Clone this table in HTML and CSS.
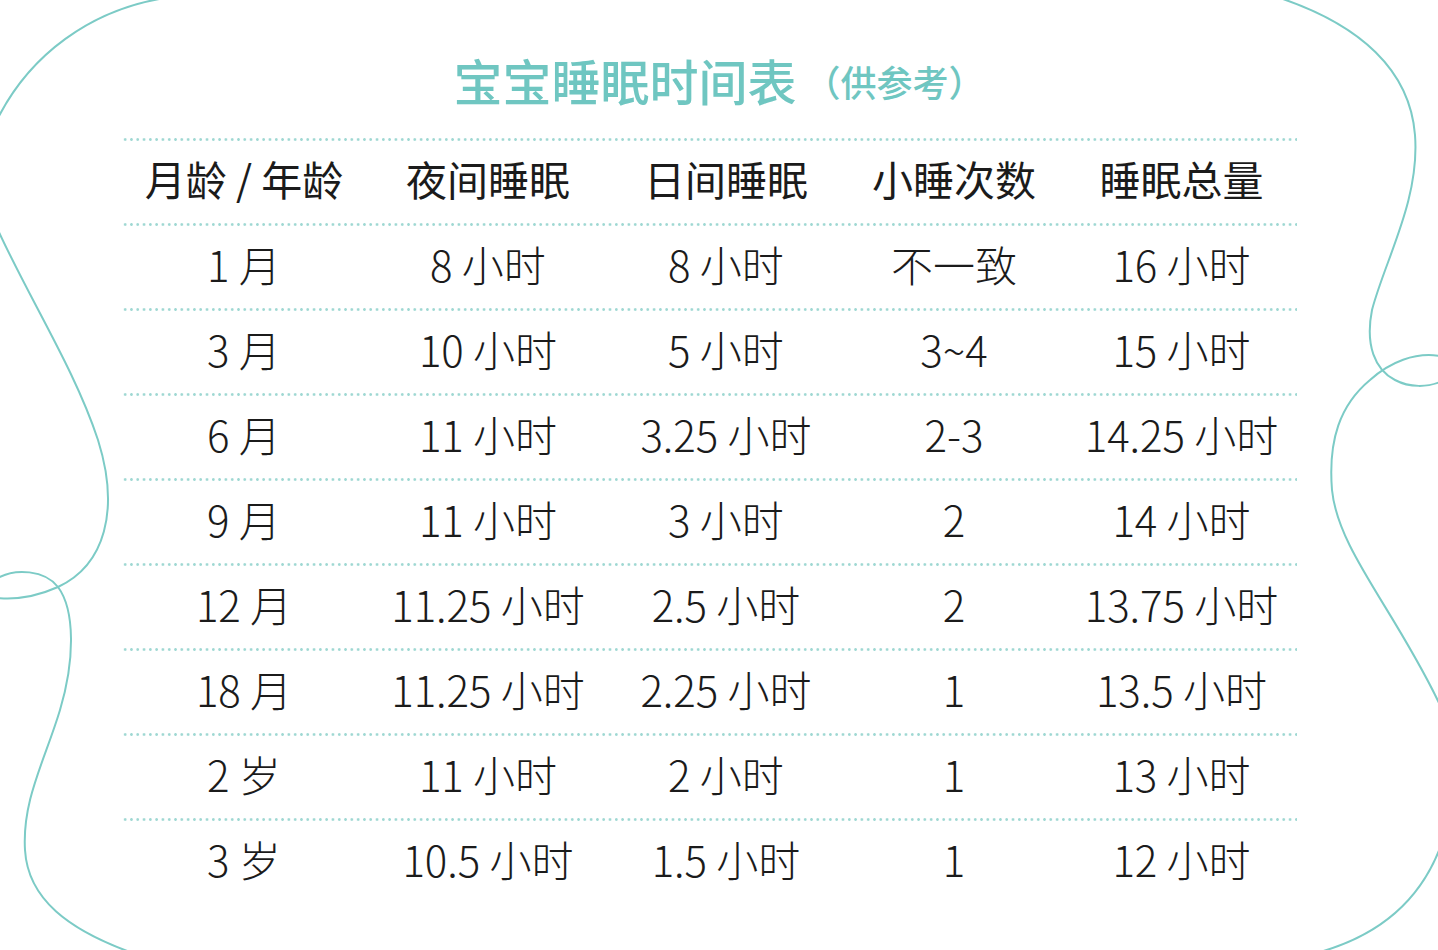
FILE: index.html
```html
<!DOCTYPE html>
<html lang="zh-CN">
<head>
<meta charset="utf-8">
<title>宝宝睡眠时间表</title>
<link rel="stylesheet" href="styles.css">
</head>
<body>
<div class="page">
  <svg class="blob" width="1438" height="950" viewBox="0 0 1438 950" aria-hidden="true">
    <g fill="none" stroke="#7ccbc6" stroke-width="2">
      <path d="M 165 -2 C 90 10, 30 55, -2 118"/>
      <path d="M -2 230 C 30 300, 75 370, 98 440 C 120 510, 105 565, 58 587 C 40 595, 20 600, -2 598"/>
      <path d="M -2 578 C 15 568, 45 570, 58 587 C 75 610, 75 660, 60 710 C 45 760, 22 800, 25 850 C 28 900, 70 930, 130 952"/>
      <path d="M 1280 -2 C 1360 25, 1410 70, 1415 135 C 1420 200, 1385 260, 1372 310 C 1365 345, 1375 370, 1395 380 C 1410 388, 1428 387, 1440 382"/>
      <path d="M 1440 356 C 1415 352, 1390 362, 1370 380 C 1340 405, 1328 440, 1332 490 C 1338 550, 1395 610, 1440 705"/>
      <path d="M 1440 848 C 1420 900, 1380 935, 1320 952"/>
    </g>
  </svg>
  <h1 class="title">宝宝睡眠时间表<span class="note">（供参考）</span></h1>
  <div class="table">
    <div class="row head">
      <div>月龄 / 年龄</div><div>夜间睡眠</div><div>日间睡眠</div><div>小睡次数</div><div>睡眠总量</div>
    </div>
    <div class="row">
      <div>1 月</div><div>8 小时</div><div>8 小时</div><div>不一致</div><div>16 小时</div>
    </div>
    <div class="row">
      <div>3 月</div><div>10 小时</div><div>5 小时</div><div>3~4</div><div>15 小时</div>
    </div>
    <div class="row">
      <div>6 月</div><div>11 小时</div><div>3.25 小时</div><div>2-3</div><div>14.25 小时</div>
    </div>
    <div class="row">
      <div>9 月</div><div>11 小时</div><div>3 小时</div><div>2</div><div>14 小时</div>
    </div>
    <div class="row">
      <div>12 月</div><div>11.25 小时</div><div>2.5 小时</div><div>2</div><div>13.75 小时</div>
    </div>
    <div class="row">
      <div>18 月</div><div>11.25 小时</div><div>2.25 小时</div><div>1</div><div>13.5 小时</div>
    </div>
    <div class="row">
      <div>2 岁</div><div>11 小时</div><div>2 小时</div><div>1</div><div>13 小时</div>
    </div>
    <div class="row">
      <div>3 岁</div><div>10.5 小时</div><div>1.5 小时</div><div>1</div><div>12 小时</div>
    </div>
  </div>
</div>
</body>
</html>
```

FILE: styles.css
```css
html, body {
  margin: 0;
  padding: 0;
  background: #ffffff;
}

.page {
  position: relative;
  width: 1438px;
  height: 950px;
  overflow: hidden;
  font-family: "Noto Sans CJK SC", "Noto Sans", sans-serif;
  color: #1b1b1b;
}

.blob {
  position: absolute;
  left: 0;
  top: 0;
  z-index: 0;
}

.title {
  position: relative;
  margin: 0;
  padding-top: 50px;
  height: 65px;
  line-height: 60px;
  text-align: center;
  font-size: 49px;
  font-weight: 500;
  color: #6fc6c1;
  letter-spacing: 0;
}

.note {
  margin-left: 8px;
  font-size: 36px;
  font-weight: 500;
  vertical-align: 4px;
}

.table {
  position: relative;
  margin: 23px 0 0 122px;
  width: 1175px;
}

.row {
  display: grid;
  grid-template-columns: 244px 244px 232px 224px 231px;
  height: 85px;
  align-items: center;
  background-image: radial-gradient(circle, #9fd8d3 1.1px, rgba(255,255,255,0) 1.6px);
  background-size: 6.3px 3px;
  background-repeat: repeat-x;
  background-position: 0 0;
  font-size: 42px;
  font-weight: 300;
  line-height: 1;
  text-align: center;
  white-space: nowrap;
}

.row > div {
  padding-bottom: 4px;
}

.row.head {
  font-weight: 400;
  font-size: 41px;
}
```
